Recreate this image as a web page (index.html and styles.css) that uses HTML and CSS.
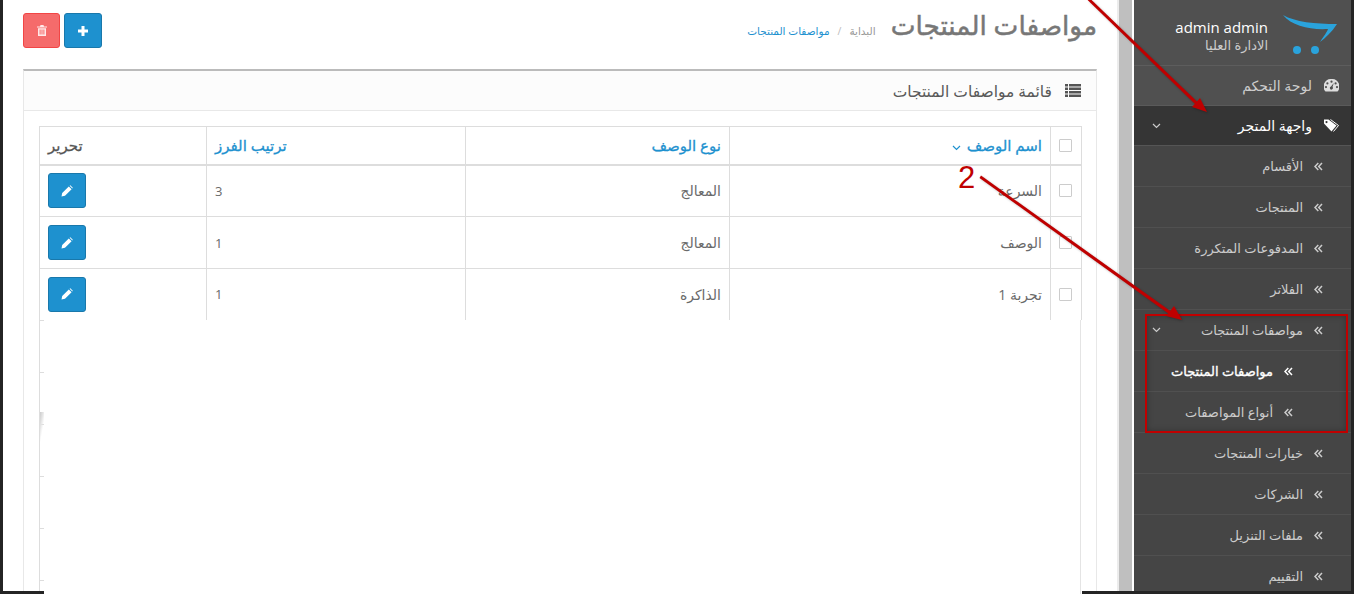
FILE: index.html
```html
<!DOCTYPE html>
<html lang="ar">
<head>
<meta charset="utf-8">
<title>مواصفات المنتجات</title>
<link rel="stylesheet" href="styles.css">
</head>
<body>
<svg class="defs" width="0" height="0">
  <symbol id="dbl" viewBox="0 0 9 9"><path d="M4.300 1L1 4.500 4.300 8M8 1L4.700 4.500 8 8" fill="none" stroke="currentColor" stroke-width="1.500"/></symbol>
  <symbol id="down" viewBox="0 0 9 6"><path d="M1 1l3.500 3.500L8 1" fill="none" stroke="currentColor" stroke-width="1.200"/></symbol>
  <symbol id="pencil" viewBox="0 0 12 12"><path d="M.5 11.500l.7-3.500L7.800 1.400l2.800 2.800L4 10.800zM8.600.7l.7-.5 2.500 2.500-.5.7z" fill="currentColor"/></symbol>
</svg>
<div class="shell">
  <div class="edge"></div>
  <main class="main">
    <header class="page-head">
      <h1 class="title">مواصفات المنتجات</h1>
      <nav class="crumbs"><span class="home">البداية</span><span class="sep">/</span><span class="here">مواصفات المنتجات</span></nav>
      <div class="actions">
        <button class="btn btn-blue"><svg width="10" height="10" viewBox="0 0 10 10"><path d="M3.500 0h3v3.500H10v3H6.500V10h-3V6.500H0v-3h3.500z" fill="#fff"/></svg></button>
        <button class="btn btn-red"><svg width="10" height="11" viewBox="0 0 10 11"><path d="M3.500 0h3l.5 1.500h3v1H0v-1h3zM1 3.300h8V11H1zM2.600 4.500v5h1v-5zM4.500 4.500v5h1v-5zM6.400 4.500v5h1v-5z" fill="#ffe9e9"/></svg></button>
      </div>
    </header>
    <section class="panel">
      <div class="panel-head">
        <svg width="16" height="13" viewBox="0 0 16 13"><path d="M0 0h3v2.500H0zM4 0h12v2.500H4zM0 3.500h3V6H0zM4 3.500h12V6H4zM0 7h3v2.500H0zM4 7h12v2.500H4zM0 10.500h3V13H0zM4 10.500h12V13H4z" fill="#555"/></svg>
        <span>قائمة مواصفات المنتجات</span>
      </div>
      <div class="panel-body">
        <table class="grid">
          <colgroup><col class="c1"><col class="c2"><col class="c3"><col class="c4"><col class="c5"></colgroup>
          <thead>
            <tr>
              <th><span class="check"></span></th>
              <th><span class="link">اسم الوصف</span> <svg class="sort" width="9" height="6"><use href="#down"/></svg></th>
              <th><span class="link">نوع الوصف</span></th>
              <th class="left"><span class="link">ترتيب الفرز</span></th>
              <th class="left">تحرير</th>
            </tr>
          </thead>
          <tbody>
            <tr><td><span class="check"></span></td><td>السرعة</td><td>المعالج</td><td class="left">3</td><td class="left"><button class="btn btn-blue"><svg width="12" height="12"><use href="#pencil"/></svg></button></td></tr>
            <tr><td><span class="check"></span></td><td>الوصف</td><td>المعالج</td><td class="left">1</td><td class="left"><button class="btn btn-blue"><svg width="12" height="12"><use href="#pencil"/></svg></button></td></tr>
            <tr class="last"><td><span class="check"></span></td><td>تجربة 1</td><td>الذاكرة</td><td class="left">1</td><td class="left"><button class="btn btn-blue"><svg width="12" height="12"><use href="#pencil"/></svg></button></td></tr>
          </tbody>
        </table>
        <div class="grid-rest"></div>
      </div>
    </section>
  </main>
  <div class="scrollbar"></div>
  <aside class="side">
    <div class="profile">
      <svg class="logo" width="54" height="40" viewBox="0 0 54 40"><path d="M0 0C12 7 32 9 54 9 49 17 42 23 37 27 41 21 44 17 45 14 27 15 9 11 0 0z" fill="#2aa3dc"/><circle cx="14" cy="35" r="4" fill="#2aa3dc"/><circle cx="32" cy="35" r="4" fill="#2aa3dc"/></svg>
      <div class="who"><div class="name" dir="ltr">admin admin</div><div class="role">الادارة العليا</div></div>
    </div>
    <a class="top">
      <svg class="ico" width="15" height="13" viewBox="0 0 15 13"><path fill-rule="evenodd" d="M7.500 0A7.500 7.500 0 0 0 1.500 12.500h12A7.500 7.500 0 0 0 7.500 0zM7.500 1.600a1 1 0 1 1 0 2.200 1 1 0 0 1 0-2.200zM3.400 3.300a1 1 0 1 1 0 2.200 1 1 0 0 1 0-2.200zM11.600 3.300a1 1 0 1 1 0 2.200 1 1 0 0 1 0-2.200zM2 7a1 1 0 1 1 0 2.200A1 1 0 0 1 2 7zM13 7a1 1 0 1 1 0 2.200A1 1 0 0 1 13 7zM9.800 4L8.500 8a1.500 1.500 0 1 1-1.500-.4z" fill="#ddd"/></svg>
      <span>لوحة التحكم</span>
    </a>
    <a class="top open">
      <svg class="ico" width="15" height="13" viewBox="0 0 15 13"><path fill-rule="evenodd" d="M0 4.500V.5h4.500L12.500 6.500 7.500 12.500zM2.500 2a1.100 1.100 0 1 0 0 2.200 1.100 1.100 0 0 0 0-2.200z" fill="#fff"/><path d="M6.500 .5L14.500 6.500 9.500 12.500" fill="none" stroke="#fff" stroke-width="1"/></svg>
      <span>واجهة المتجر</span>
      <svg class="caret" width="9" height="6"><use href="#down"/></svg>
    </a>
    <a class="item"><svg class="dbl" width="9" height="9"><use href="#dbl"/></svg><span>الأقسام</span></a>
    <a class="item"><svg class="dbl" width="9" height="9"><use href="#dbl"/></svg><span>المنتجات</span></a>
    <a class="item"><svg class="dbl" width="9" height="9"><use href="#dbl"/></svg><span>المدفوعات المتكررة</span></a>
    <a class="item"><svg class="dbl" width="9" height="9"><use href="#dbl"/></svg><span>الفلاتر</span></a>
    <a class="item"><svg class="dbl" width="9" height="9"><use href="#dbl"/></svg><span>مواصفات المنتجات</span><svg class="caret" width="9" height="6"><use href="#down"/></svg></a>
    <a class="item sub current"><svg class="dbl" width="9" height="9"><use href="#dbl"/></svg><span>مواصفات المنتجات</span></a>
    <a class="item sub"><svg class="dbl" width="9" height="9"><use href="#dbl"/></svg><span>أنواع المواصفات</span></a>
    <a class="item"><svg class="dbl" width="9" height="9"><use href="#dbl"/></svg><span>خيارات المنتجات</span></a>
    <a class="item"><svg class="dbl" width="9" height="9"><use href="#dbl"/></svg><span>الشركات</span></a>
    <a class="item"><svg class="dbl" width="9" height="9"><use href="#dbl"/></svg><span>ملفات التنزيل</span></a>
    <a class="item"><svg class="dbl" width="9" height="9"><use href="#dbl"/></svg><span>التقييم</span></a>
  </aside>
  <div class="edge right"></div>
  <div class="floor floor-a"></div>
  <div class="floor floor-b"></div>
  <div class="redbox"></div>
  <span class="step">2</span>
  <svg class="arrows" width="1354" height="594" viewBox="0 0 1354 594">
    <g fill="#bf0000" stroke="none">
      <path d="M1086.500 -1L1088.500 -3 1197.500 102 1195.500 104.500z"/>
      <path d="M1192 107L1200 98 1207 112z"/>
      <path d="M979.500 178L981 175.500 1171 311.500 1169 314z"/>
      <path d="M1166 316L1174 306 1182 320z"/>
    </g>
  </svg>
</div>
</body>
</html>
```
FILE: styles.css
```css
* { box-sizing: border-box; }
html, body { margin: 0; height: 594px; overflow: hidden; background: #fff; }
body { font-family: "Open Sans", "DejaVu Sans", sans-serif; font-size: 13px; color: #666; }
.defs { position: absolute; }

.shell { position: relative; display: flex; height: 594px; overflow: hidden; }
.edge { width: 3px; flex: none; background: #242424; }

.main { width: 1114px; flex: none; padding: 0 20px; direction: rtl; display: flex; flex-direction: column; background: #fff; }
.page-head { height: 69px; flex: none; display: flex; align-items: flex-start; gap: 15px; }
.title { margin: 10px 0 0; font-size: 26.300px; line-height: 30px; font-weight: 400; -webkit-text-stroke: .5px #777; color: #777; white-space: nowrap; }
.crumbs { margin-top: 24px; display: flex; gap: 8px; font-size: 10.500px; line-height: 14px; white-space: nowrap; }
.home { color: #999; }
.sep { color: #bbb; }
.here { color: #1e91cf; }
.actions { margin-right: auto; margin-top: 13px; display: flex; gap: 4px; }

.btn { display: flex; align-items: center; justify-content: center; height: 35px; padding: 0; border-radius: 3px; border: 1px solid; color: #fff; }
.btn-blue { width: 38px; background: #1e91cf; border-color: #1978ab; }
.btn-red { width: 37px; background: #f56b6b; border-color: #f24545; }

.panel { flex: 1; display: flex; flex-direction: column; border: 1px solid #e8e8e8; border-top: 2px solid #bbb; border-bottom: 0; }
.panel-head { height: 40px; flex: none; display: flex; align-items: center; gap: 13px; padding: 0 15px; background: #fcfcfc; border-bottom: 1px solid #e8e8e8; font-size: 15.500px; color: #595959; }
.panel-body { flex: 1; display: flex; flex-direction: column; padding: 15px 15px 0; }

.grid { width: 100%; margin-right: -1px; flex: none; table-layout: fixed; border-collapse: collapse; }
.c1 { width: 31px; }
.c2 { width: 321px; }
.c3 { width: 264px; }
.c4 { width: 259px; }
.c5 { width: 167px; }
.grid th, .grid td { border: 1px solid #ddd; padding: 0 8px; text-align: right; }
.grid th { height: 38px; font-size: 15px; font-weight: 400; -webkit-text-stroke: .3px #555; color: #555; border-bottom-width: 2px; }
.grid td { height: 52px; font-size: 14px; color: #6a6a6a; }
.grid .last td { height: 51px; border-bottom: 0; }
.grid th:first-child, .grid td:first-child { padding: 0 9px; }
.grid .left { text-align: left; }
.grid td.left { font-size: 13px; }
.grid .left .btn { margin-right: auto; }
.link { color: #1e91cf; }
.grid th .link { -webkit-text-stroke-color: #1e91cf; }
.sort { color: #1e91cf; margin-right: 2px; }
.check { display: block; width: 13px; height: 13px; border: 1px solid #ccc; background: #fff; border-radius: 1px; }
.grid-rest { flex: 1; width: 100%; border-left: 1px solid #ddd; border-right: 1px solid #e4e4e4; background: linear-gradient(100deg, #ccc 0, #e4e4e4 30%, transparent 60%) left 0 top 92px / 4px 32px no-repeat, repeating-linear-gradient(to bottom, #ddd 0, #ddd 1px, transparent 1px, transparent 52px) left top / 4px 100% no-repeat; }

.scrollbar { width: 15px; flex: none; background: #bfbfbf; border-left: 2px solid #ececec; }
.side { width: 219px; flex: none; direction: rtl; border-left: 2px solid #fff; background: #454545; color: #ccc; }
.profile { height: 66px; display: flex; align-items: flex-start; gap: 15px; padding: 15px 14px 0 0; background: #505050; border-bottom: 1px solid #5d5d5d; }
.logo { flex: none; }
.who { padding-top: 2px; }
.name { font-size: 15px; line-height: 20px; color: #fff; text-align: right; }
.role { font-size: 13px; line-height: 16px; color: #ccc; }
.top, .item { display: flex; align-items: center; height: 41px; border-bottom: 1px solid #505050; white-space: nowrap; }
.top { height: 40px; padding: 0 12px 0 18px; gap: 12px; font-size: 14px; background: #505050; border-bottom-color: #5a5a5a; }
.top.open { background: #353535; color: #fff; border-bottom-color: #555; }
.item { padding: 0 28px 0 18px; gap: 11px; }
.dbl { flex: none; }
.caret { margin-right: auto; flex: none; color: #ccc; }
.sub { padding-right: 58px; }
.current { color: #fff; -webkit-text-stroke: .35px #fff; }

.floor { position: absolute; bottom: 0; height: 3px; background: #242424; }
.floor-a { left: 0; width: 44px; }
.floor-b { left: 1082px; right: 0; }
.redbox { position: absolute; left: 1145px; top: 314px; width: 203px; height: 119px; border: 2px solid #c00000; box-shadow: inset 0 0 6px rgba(0,0,0,.25); }
.step { position: absolute; left: 958px; top: 160px; font-family: "Liberation Sans", sans-serif; font-size: 31px; line-height: 36px; color: #bf0000; }
.arrows { position: absolute; left: 0; top: 0; pointer-events: none; filter: drop-shadow(1px 1px 1px rgba(0,0,0,.25)); }
```
